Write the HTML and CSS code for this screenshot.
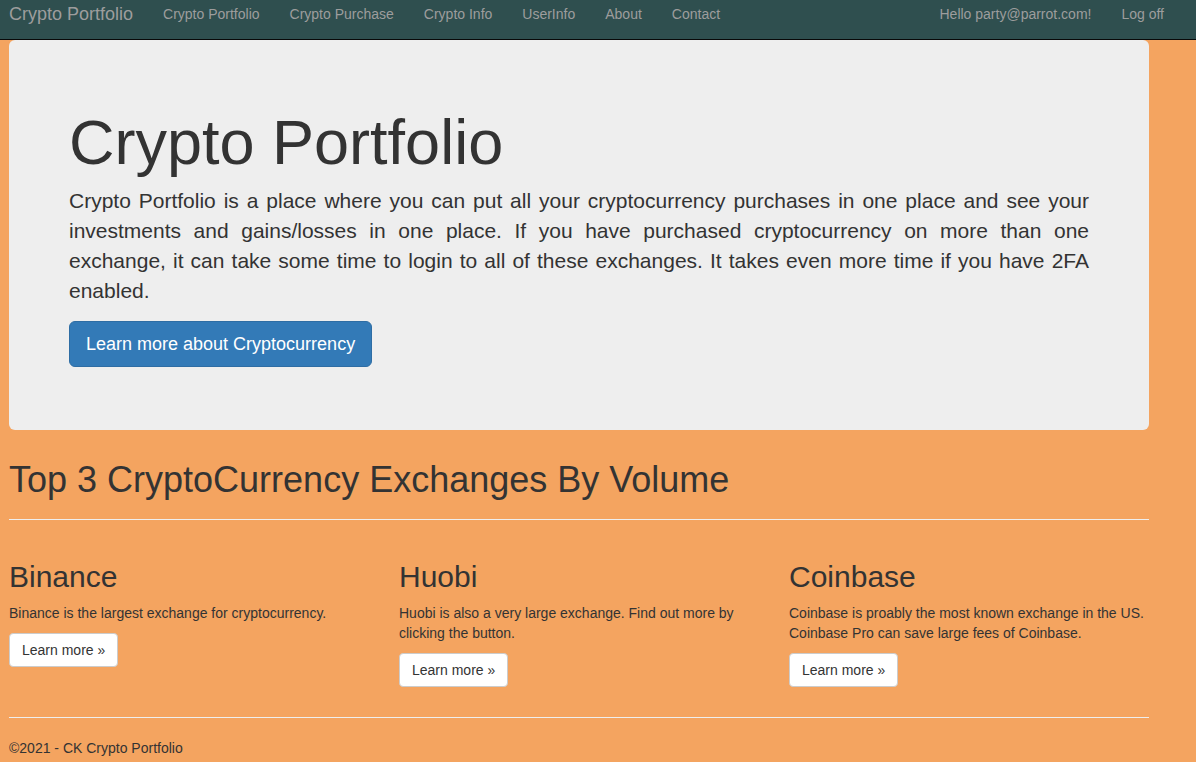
FILE: index.html
```html
<!DOCTYPE html>
<html lang="en">
<head>
<meta charset="utf-8">
<title>Crypto Portfolio</title>
<link rel="stylesheet" href="styles.css">
</head>
<body>
<nav class="navbar">
  <a class="brand" href="#">Crypto Portfolio</a>
  <ul class="nav">
    <li><a href="#">Crypto Portfolio</a></li>
    <li><a href="#">Crypto Purchase</a></li>
    <li><a href="#">Crypto Info</a></li>
    <li><a href="#">UserInfo</a></li>
    <li><a href="#">About</a></li>
    <li><a href="#">Contact</a></li>
  </ul>
  <ul class="nav nav-right">
    <li><a href="#">Hello party@parrot.com!</a></li>
    <li><a href="#">Log off</a></li>
  </ul>
</nav>
<main class="container">
  <section class="jumbotron">
    <h1 class="jumbo-title">Crypto Portfolio</h1>
    <p class="lead">Crypto Portfolio is a place where you can put all your cryptocurrency purchases in one place and see your investments and gains/losses in one place. If you have purchased cryptocurrency on more than one exchange, it can take some time to login to all of these exchanges. It takes even more time if you have 2FA enabled.</p>
    <p class="lead-action"><a class="btn btn-primary btn-lg" href="#">Learn more about Cryptocurrency</a></p>
  </section>
  <h1 class="section-title">Top 3 CryptoCurrency Exchanges By Volume</h1>
  <hr>
  <div class="row">
    <div class="col">
      <h2>Binance</h2>
      <p>Binance is the largest exchange for cryptocurrency.</p>
      <p><a class="btn btn-default" href="#">Learn more &raquo;</a></p>
    </div>
    <div class="col">
      <h2>Huobi</h2>
      <p>Huobi is also a very large exchange. Find out more by clicking the button.</p>
      <p><a class="btn btn-default" href="#">Learn more &raquo;</a></p>
    </div>
    <div class="col">
      <h2>Coinbase</h2>
      <p>Coinbase is proably the most known exchange in the US. Coinbase Pro can save large fees of Coinbase.</p>
      <p><a class="btn btn-default" href="#">Learn more &raquo;</a></p>
    </div>
  </div>
  <hr>
  <footer>
    <p>&copy;2021 - CK Crypto Portfolio</p>
  </footer>
</main>
</body>
</html>
```
FILE: styles.css
```css
* { box-sizing: border-box; }
html, body { margin: 0; padding: 0; }
body {
  background: #f4a460;
  color: #333;
  font-family: "Liberation Sans", Arial, Helvetica, sans-serif;
  font-size: 14px;
  line-height: 1.42857143;
}
a { text-decoration: none; }

.navbar {
  display: flex;
  align-items: flex-start;
  height: 40px;
  background: #2f4f4f;
  border-bottom: 1px solid #080808;
  padding: 0 17px 0 9px;
}
.brand {
  font-size: 18px;
  line-height: 20px;
  padding-top: 4px;
  padding-right: 15px;
  color: #9d9d9d;
}
.nav {
  display: flex;
  list-style: none;
  margin: 0;
  padding: 0;
}
.nav a {
  display: block;
  padding: 4px 15px 0;
  line-height: 20px;
  color: #9d9d9d;
}
.nav-right { margin-left: auto; }

.container {
  width: 1140px;
  margin-left: 9px;
}
.jumbotron {
  background: #eee;
  border-radius: 6px;
  padding: 48px 60px;
  margin-bottom: 30px;
}
h1, h2 {
  font-weight: 500;
  line-height: 1.1;
  margin: 20px 0 10px;
}
.jumbo-title {
  font-size: 63px;
  margin-bottom: 9px;
}
.lead {
  font-size: 21px;
  font-weight: 200;
  text-align: justify;
  margin: 0 0 15px;
}
.lead-action {
  margin: 0 0 15px;
  font-size: 21px;
}
.section-title {
  font-size: 36px;
  line-height: 39px;
  margin-top: 0;
}
hr {
  margin: 20px 0;
  border: 0;
  border-top: 1px solid #eee;
}
.row {
  display: grid;
  grid-template-columns: repeat(3, 1fr);
  margin: 0 -15px;
}
.col {
  padding: 0 15px;
}
.col h2 {
  font-size: 30px;
}
p { margin: 0 0 10px; }

.btn {
  display: inline-block;
  border: 1px solid transparent;
  vertical-align: middle;
  text-align: center;
  white-space: nowrap;
}
.btn-default {
  padding: 6px 12px;
  font-size: 14px;
  line-height: 20px;
  border-radius: 4px;
  background: #fff;
  border-color: #ccc;
  color: #333;
}
.btn-primary {
  background: #337ab7;
  border-color: #2e6da4;
  color: #fff;
}
.btn-lg {
  padding: 10px 16px;
  font-size: 18px;
  line-height: 24px;
  border-radius: 6px;
}
footer p { margin: 0 0 10px; }
```
